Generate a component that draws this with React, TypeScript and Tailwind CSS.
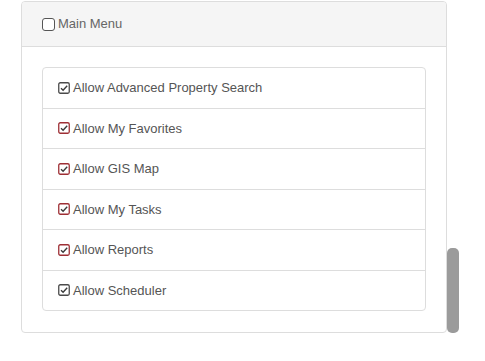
const items = [
  { label: "Allow Advanced Property Search", red: false },
  { label: "Allow My Favorites", red: true },
  { label: "Allow GIS Map", red: true },
  { label: "Allow My Tasks", red: true },
  { label: "Allow Reports", red: true },
  { label: "Allow Scheduler", red: false },
];

function CheckSquare({ red }: { red: boolean }) {
  return (
    <svg width="12" height="12" viewBox="0 0 12 12" className="shrink-0">
      <rect x="0.75" y="0.75" width="10.5" height="10.5" rx="1.5" fill="none" stroke={red ? "#9e2f35" : "#4a4a4a"} strokeWidth="1.3" />
      <path d="M3 6.2 L5.1 8.2 L9.2 3.8" fill="none" stroke="#3a3a3a" strokeWidth="1.4" />
    </svg>
  );
}

export default function App() {
  return (
    <div className="relative h-[361px] w-full bg-white font-['Liberation_Sans',Arial,sans-serif] text-[13px] text-[#555]">
      <div className="ml-[21px] mt-px w-[426px] overflow-hidden rounded-[4px] border border-[#ddd]">
        <div className="flex h-[45px] items-center gap-[3px] border-b border-[#ddd] bg-[#f5f5f5] px-[20px]">
          <span className="box-border h-[13px] w-[13px] rounded-[3px] border border-[#555] bg-white" />
          <span className="text-[#666]">Main Menu</span>
        </div>
        <div className="px-[20px] pb-[21px] pt-[20px]">
          <ul className="rounded-[4px] border border-[#ddd]">
            {items.map((it, i) => (
              <li
                key={it.label}
                className={`flex items-center gap-[3px] px-[15px] py-[10px] leading-[19.5px] ${i > 0 ? "border-t border-[#ddd]" : ""}`}
              >
                <CheckSquare red={it.red} />
                <span className="text-[#555]">{it.label}</span>
              </li>
            ))}
          </ul>
        </div>
      </div>
      <div className="absolute left-[447px] top-[247px] h-[85px] w-[12px] rounded-[5px] bg-[#9b9b9b]" />
    </div>
  );
}
